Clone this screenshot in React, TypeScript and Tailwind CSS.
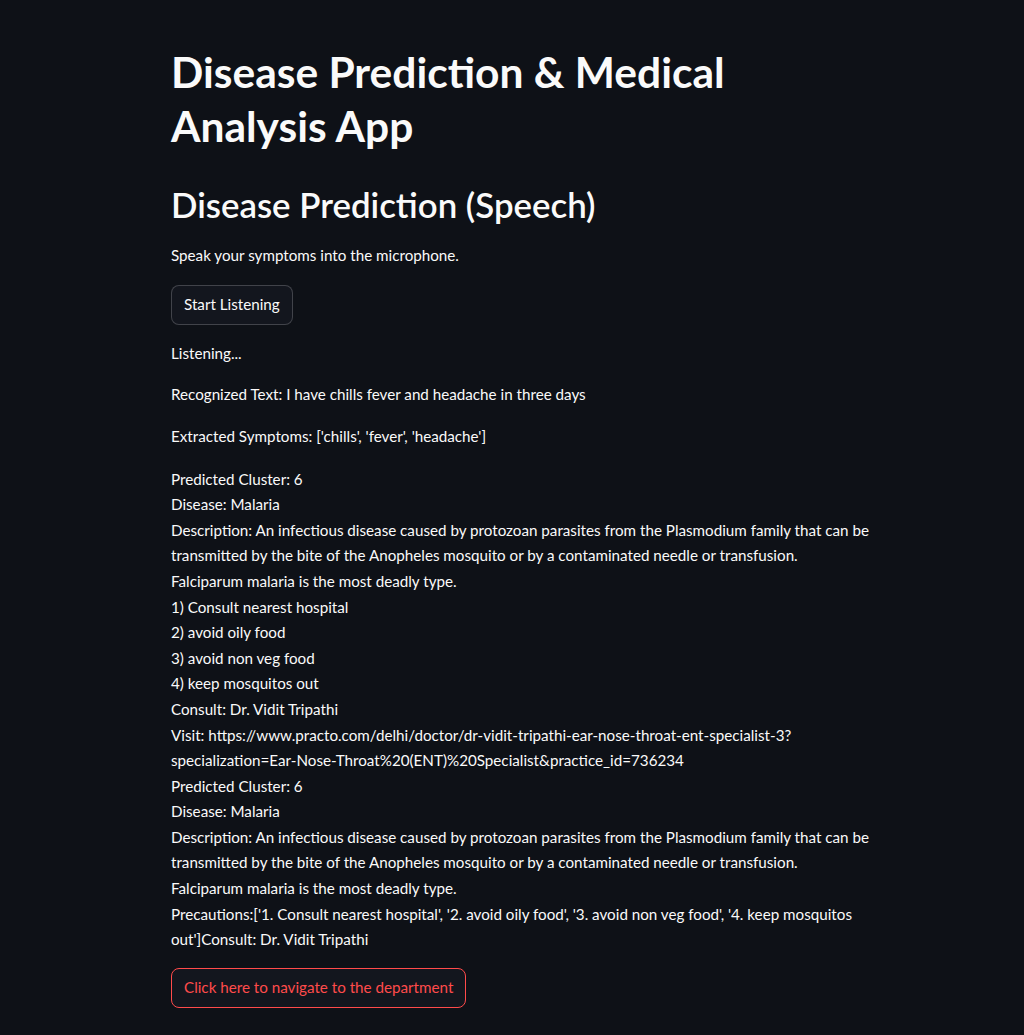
import React from "react";

const block1 = [
  "Predicted Cluster: 6",
  "Disease: Malaria",
  "Description: An infectious disease caused by protozoan parasites from the Plasmodium family that can be",
  "transmitted by the bite of the Anopheles mosquito or by a contaminated needle or transfusion.",
  "Falciparum malaria is the most deadly type.",
  "1) Consult nearest hospital",
  "2) avoid oily food",
  "3) avoid non veg food",
  "4) keep mosquitos out",
  "Consult: Dr. Vidit Tripathi",
  "Visit: https://www.practo.com/delhi/doctor/dr-vidit-tripathi-ear-nose-throat-ent-specialist-3?",
  "specialization=Ear-Nose-Throat%20(ENT)%20Specialist&practice_id=736234",
  "Predicted Cluster: 6",
  "Disease: Malaria",
  "Description: An infectious disease caused by protozoan parasites from the Plasmodium family that can be",
  "transmitted by the bite of the Anopheles mosquito or by a contaminated needle or transfusion.",
  "Falciparum malaria is the most deadly type.",
  "Precautions:['1. Consult nearest hospital', '2. avoid oily food', '3. avoid non veg food', '4. keep mosquitos",
  "out']Consult: Dr. Vidit Tripathi",
];

export default function App() {
  return (
    <div className="min-h-[1035px] bg-[#0e1117] text-[#fafafa] font-[Lato,sans-serif]">
      <div className="ml-[171px] w-[704px] pt-[45px] pb-[28px] flex flex-col">
        <h1 className="text-[42.5px] leading-[53.5px] font-bold">
          Disease Prediction &amp; Medical
          <br />
          Analysis App
        </h1>
        <h2 className="mt-[31px] text-[34.8px] leading-[43.2px] font-semibold">
          Disease Prediction (Speech)
        </h2>
        <p className="mt-[17px] text-[15.2px] leading-[25.6px]">
          Speak your symptoms into the microphone.
        </p>
        <div className="mt-[16px]">
          <button className="h-[40px] px-[12px] rounded-[8px] border border-[rgba(250,250,250,0.2)] bg-[#13161e] text-[15.2px] text-[#fafafa]">
            Start Listening
          </button>
        </div>
        <p className="mt-[16px] text-[15.2px] leading-[25.6px]">Listening...</p>
        <p className="mt-[16px] text-[15.2px] leading-[25.6px]">
          Recognized Text: I have chills fever and headache in three days
        </p>
        <p className="mt-[16px] text-[15.2px] leading-[25.6px]">
          Extracted Symptoms: ['chills', 'fever', 'headache']
        </p>
        <div className="mt-[17px] text-[15.2px] leading-[25.6px]">
          {block1.map((l, i) => (
            <div key={i} className="whitespace-nowrap">
              {l}
            </div>
          ))}
        </div>
        <div className="mt-[15px]">
          <button className="h-[40px] px-[12px] rounded-[8px] border border-[#ff4b4b] bg-[#13161e] text-[15.2px] text-[#ff4b4b]">
            Click here to navigate to the department
          </button>
        </div>
      </div>
    </div>
  );
}
